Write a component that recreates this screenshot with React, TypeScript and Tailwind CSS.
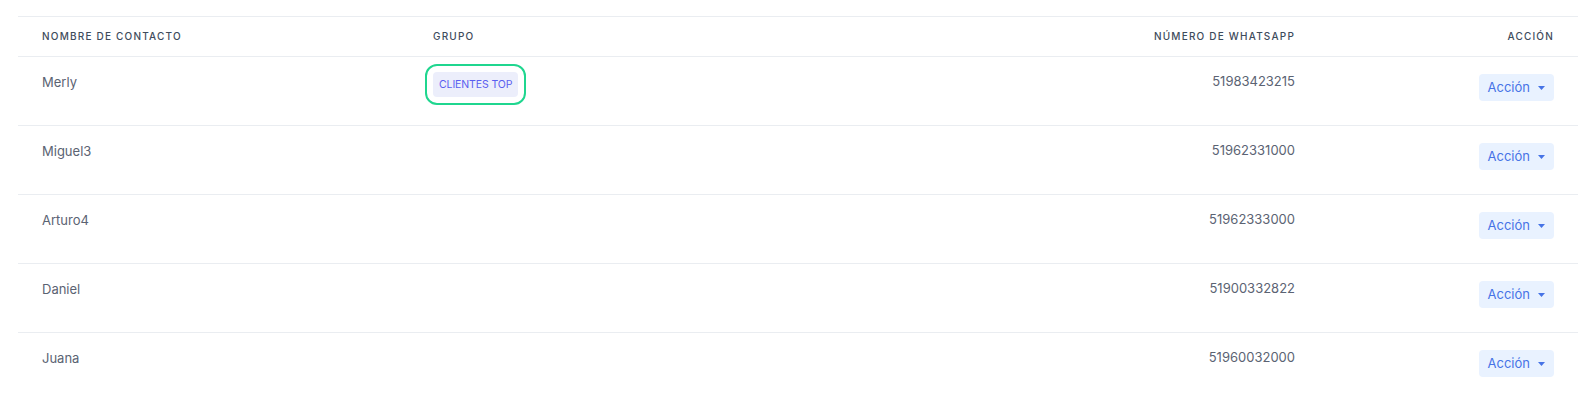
import React from "react";

type Contact = {
  name: string;
  group?: string;
  phone: string;
};

const contacts: Contact[] = [
  { name: "Merly", group: "CLIENTES TOP", phone: "51983423215" },
  { name: "Miguel3", phone: "51962331000" },
  { name: "Arturo4", phone: "51962333000" },
  { name: "Daniel", phone: "51900332822" },
  { name: "Juana", phone: "51960032000" },
];

function Caret() {
  return (
    <svg width="7" height="4" viewBox="0 0 7 4" className="ml-[8px]">
      <path d="M0 0h7L3.5 4z" fill="currentColor" />
    </svg>
  );
}

function ActionButton() {
  return (
    <button
      type="button"
      className="flex items-center h-[27px] px-[9px] rounded-[4px] bg-[#e9f2ff] text-[#4673e6] text-[13px]"
    >
      Acción
      <Caret />
    </button>
  );
}

export default function App() {
  return (
    <div
      className="bg-white min-h-screen pt-4 pb-4"
      style={{ fontFamily: "Inter, 'Open Sans', sans-serif" }}
    >
      <div className="ml-[18px] mr-4 border-t border-[#eaedf1]">
        <div className="grid grid-cols-[391px_1fr_1fr_259px] h-[40px] items-center border-b border-[#eaedf1] text-[10px] font-medium tracking-[0.12em] text-[#3e4b5c] uppercase">
          <div className="pl-6">Nombre de contacto</div>
          <div className="pl-6">Grupo</div>
          <div className="pr-6 text-right">Número de WhatsApp</div>
          <div className="pr-6 text-right">Acción</div>
        </div>

        {contacts.map((c, i) => (
          <div
            key={c.name}
            className={
              "grid grid-cols-[391px_1fr_1fr_259px] h-[69px] " +
              (i < contacts.length - 1 ? "border-b border-[#eaedf1]" : "")
            }
          >
            <div className="pl-6 pt-[16px] text-[13px] text-[#5b6373]">{c.name}</div>
            <div className="pl-6 pt-[13px]">
              {c.group && (
                <span className="inline-flex items-center h-[25px] px-[6px] rounded-[4px] bg-[#eceefb] text-[#5a5ef0] text-[10.5px] tracking-[-0.01em] outline-2 outline-offset-[6px] outline-[#1fd68f]">
                  {c.group}
                </span>
              )}
            </div>
            <div className="pr-6 pt-[15px] text-right text-[13px] text-[#5b6373]">{c.phone}</div>
            <div className="pr-6 pt-[17px] flex justify-end items-start">
              <ActionButton />
            </div>
          </div>
        ))}
      </div>
    </div>
  );
}
